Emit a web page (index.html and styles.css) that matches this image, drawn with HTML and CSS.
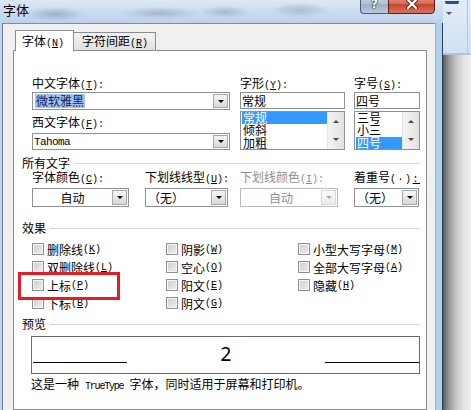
FILE: index.html
```html
<!DOCTYPE html>
<html lang="zh-CN">
<head>
<meta charset="utf-8">
<title>字体</title>
<link rel="stylesheet" href="styles.css">
</head>
<body>
<div class="desk">
  <div class="window">
    <div class="titlebar">
      <span class="title">字体</span>
      <div class="caption-buttons">
        <span class="cap-btn help">?</span>
        <span class="cap-btn close">
          <svg width="12" height="10" viewBox="0 0 12 10">
            <path d="M2 1 L10 9 M10 1 L2 9" stroke="#5a1a10" stroke-width="4" stroke-linecap="round"/>
            <path d="M2 1 L10 9 M10 1 L2 9" stroke="#ffffff" stroke-width="2.2" stroke-linecap="round"/>
          </svg>
        </span>
      </div>
    </div>
    <div class="window-body">
      <div class="frame-left"></div>
      <div class="client">
        <div class="tabs">
          <div class="tab active">字体<span class="key">(<u>N</u>)</span></div>
          <div class="tab">字符间距<span class="key">(<u>R</u>)</span></div>
        </div>
        <div class="panel">
          <div class="font-row">
            <div class="col col-name">
              <div class="lbl">中文字体<span class="key">(<u>T</u>):</span></div>
              <div class="combo tall"><span class="field"><span class="sel">微软雅黑</span></span><span class="drop"></span></div>
              <div class="lbl lbl-second">西文字体<span class="key">(<u>F</u>):</span></div>
              <div class="combo short"><span class="field"><span class="mono">Tahoma</span></span><span class="drop"></span></div>
            </div>
            <div class="col col-style">
              <div class="lbl">字形<span class="key">(<u>Y</u>):</span></div>
              <div class="textbox">常规</div>
              <div class="listbox">
                <ul class="items"><li class="on">常规</li><li>倾斜</li><li>加粗</li></ul>
                <div class="vscroll"><span class="sbtn"><span class="arrow up"></span></span><span class="sbtn"><span class="arrow down"></span></span></div>
              </div>
            </div>
            <div class="col col-size">
              <div class="lbl">字号<span class="key">(<u>S</u>):</span></div>
              <div class="textbox">四号</div>
              <div class="listbox">
                <ul class="items"><li>三号</li><li>小三</li><li class="on">四号</li></ul>
                <div class="vscroll"><span class="sbtn"><span class="arrow up"></span></span><span class="sbtn"><span class="arrow down"></span></span></div>
              </div>
            </div>
          </div>

          <div class="group group-all">所有文字</div>
          <div class="field-row">
            <div class="fld">
              <div class="lbl">字体颜色<span class="key">(<u>C</u>):</span></div>
              <div class="combo mid w-color"><span class="field center">自动</span><span class="drop"></span></div>
            </div>
            <div class="fld">
              <div class="lbl">下划线线型<span class="key">(<u>U</u>):</span></div>
              <div class="combo mid w-line"><span class="field pad">（无）</span><span class="drop"></span></div>
            </div>
            <div class="fld">
              <div class="lbl off">下划线颜色<span class="key">(<u>I</u>):</span></div>
              <div class="combo mid w-lcolor disabled"><span class="field center">自动</span><span class="drop"></span></div>
            </div>
            <div class="fld">
              <div class="lbl">着重号<span class="key wide">(·)<u>:</u></span></div>
              <div class="combo mid w-dot"><span class="field pad">（无）</span><span class="drop"></span></div>
            </div>
          </div>

          <div class="group group-fx">效果</div>
          <div class="checks">
            <div class="check"><span class="box"></span>删除线<span class="key">(<u>K</u>)</span></div>
            <div class="check"><span class="box"></span>双删除线<span class="key">(<u>L</u>)</span></div>
            <div class="check"><span class="box"></span>上标<span class="key">(<u>P</u>)</span></div>
            <div class="check"><span class="box"></span>下标<span class="key">(<u>B</u>)</span></div>
            <div class="check"><span class="box"></span>阴影<span class="key">(<u>W</u>)</span></div>
            <div class="check"><span class="box"></span>空心<span class="key">(<u>O</u>)</span></div>
            <div class="check"><span class="box"></span>阳文<span class="key">(<u>E</u>)</span></div>
            <div class="check"><span class="box"></span>阴文<span class="key">(<u>G</u>)</span></div>
            <div class="check"><span class="box"></span>小型大写字母<span class="key">(<u>M</u>)</span></div>
            <div class="check"><span class="box"></span>全部大写字母<span class="key">(<u>A</u>)</span></div>
            <div class="check"><span class="box"></span>隐藏<span class="key">(<u>H</u>)</span></div>
          </div>

          <div class="group group-preview">预览</div>
          <div class="preview">
            <span class="rule rule-left"></span>
            <span class="sample">2</span>
            <span class="rule"></span>
          </div>
          <div class="note">这是一种<span class="mono-s">TrueType</span>字体，同时适用于屏幕和打印机。</div>
        </div>
      </div>
      <div class="frame-right"></div>
    </div>
  </div>
  <div class="side">
    <div class="ribbon">
      <div class="ribbon-group">
        <span class="ribbon-glyph"></span>
        <span class="ribbon-more"></span>
      </div>
    </div>
    <div class="side-shadow"></div>
  </div>
</div>
<div class="callout"></div>
</body>
</html>
```

FILE: styles.css
```css
* { box-sizing: border-box; }

html, body { margin: 0; padding: 0; }

body {
  width: 471px;
  height: 410px;
  overflow: hidden;
  position: relative;
  background: #fff;
  color: #000;
  font-family: "Noto Sans CJK SC", "Noto Sans", sans-serif;
  font-size: 12px;
}

u { text-decoration: underline; text-underline-offset: 1px; }

/* mnemonic suffix such as (N): drawn with half-width monospaced glyphs */
.key {
  font-family: "Liberation Mono", monospace;
  font-size: 10px;
}

.key.wide { letter-spacing: 1.5px; }

.desk { display: flex; height: 410px; }

/* ---------- window chrome ---------- */
.window {
  width: 443px;
  flex: none;
  display: flex;
  flex-direction: column;
}

.titlebar {
  height: 23px;
  flex: none;
  display: flex;
  justify-content: space-between;
  align-items: flex-start;
  background:
    radial-gradient(ellipse 30px 7px at 55px 14px, rgba(80, 100, 128, 0.35), transparent),
    radial-gradient(ellipse 40px 6px at 160px 13px, rgba(80, 100, 128, 0.3), transparent),
    radial-gradient(ellipse 25px 6px at 225px 12px, rgba(80, 100, 128, 0.3), transparent),
    radial-gradient(ellipse 30px 7px at 300px 10px, rgba(80, 100, 128, 0.28), transparent),
    linear-gradient(#dce8f5, #c9dbef 55%, #bcd2ea);
}

.title {
  margin: 2px 0 0 3px;
  font-size: 13px;
  line-height: 16px;
}

.caption-buttons {
  display: flex;
  margin: -7px 8px 0 0;
}

.cap-btn {
  height: 21px;
  display: flex;
  align-items: center;
  justify-content: center;
}

.help {
  width: 28px;
  border: 1px solid #4b5d73;
  border-right: none;
  border-radius: 0 0 0 4px;
  background: linear-gradient(#d2deea, #b2c3d6 50%, #9aafc6 51%, #b8c9da);
  color: #fff;
  font-family: "DejaVu Sans", sans-serif;
  font-weight: bold;
  font-size: 12px;
  text-shadow: 0 0 1px #1f2d40, 0 0 1px #1f2d40, 0 0 2px #1f2d40;
}

.close {
  width: 47px;
  border: 1px solid #5d1a10;
  border-radius: 0 0 4px 0;
  background: linear-gradient(#eba597, #d86b57 50%, #c2432d 51%, #d9735d);
}

.window-body {
  flex: 1;
  display: flex;
  min-height: 0;
}

.frame-left {
  width: 3px;
  flex: none;
  background: linear-gradient(to right, #c1d6ec 0 2px, #66778c 2px);
}

.frame-right {
  width: 8px;
  flex: none;
  background: linear-gradient(to right, #a7adb5 0 1px, #b0d1ee 1px 7px, #2f3e50 7px);
}

.client {
  width: 432px;
  flex: none;
  display: flex;
  flex-direction: column;
  background: #f0f0f0;
  border-top: 1px solid #7d8fa5;
  padding: 6px 0 0 10px;
}

/* ---------- tabs ---------- */
.tabs {
  height: 20px;
  flex: none;
  display: flex;
  align-items: flex-end;
  padding-left: 2px;
}

.tab {
  border: 1px solid #898c95;
  border-bottom: none;
  line-height: 14px;
  white-space: nowrap;
}

.tab.active {
  position: relative;
  z-index: 1;
  width: 59px;
  height: 21px;
  margin-bottom: -1px;
  padding: 3px 0 0 6px;
  background: #fff;
}

.tab + .tab {
  width: 83px;
  height: 18px;
  margin-left: -1px;
  padding: 1px 0 0 8px;
  background: linear-gradient(#f3f3f3, #e1e1e1);
}

.panel {
  width: 414px;
  flex: 1;
  background: #fff;
  border: 1px solid #898c95;
  padding: 25px 6px 0 8px;
}

/* ---------- shared controls ---------- */
.lbl {
  height: 14px;
  line-height: 14px;
  white-space: nowrap;
}

.lbl.off { color: #8e8e8e; }

.combo {
  display: flex;
  border: 1px solid #8e9196;
  background: #fff;
  white-space: nowrap;
}

.combo .field {
  flex: 1;
  min-width: 0;
  display: flex;
  align-items: center;
  padding-left: 1px;
}

.combo .field.center { justify-content: center; }
.combo .field.pad { padding-left: 2px; }

.combo .drop {
  width: 15px;
  flex: none;
  margin: 1px;
  border: 1px solid #a5a8ac;
  background: linear-gradient(#f7f7f7, #d8d8d8);
  display: flex;
  align-items: center;
  justify-content: center;
}

.combo .drop::after {
  content: "";
  border-top: 3px solid #000;
  border-left: 3px solid transparent;
  border-right: 3px solid transparent;
}

.combo.disabled { border-color: #b9bcc0; color: #8e8e8e; }
.combo.disabled .drop { border-color: #d4d6d8; background: linear-gradient(#fbfbfb, #ececec); }
.combo.disabled .drop::after { border-top-color: #a8a8a8; }

.combo.tall { height: 18px; margin-top: 2px; }
.combo.short { height: 17px; margin-top: 4px; }
.combo.mid { height: 19px; margin-top: 4px; }

.sel {
  background: #a3c3ee;
  color: #0d1d5e;
  padding: 0 1px;
  line-height: 14px;
  margin-left: 1px;
}

.mono {
  font-family: "Liberation Mono", monospace;
  font-size: 11px;
  letter-spacing: -0.6px;
}

.textbox {
  height: 17px;
  margin-top: 2px;
  border: 1px solid #8e9196;
  padding-left: 1px;
  line-height: 15px;
}

.listbox {
  height: 39px;
  margin-top: 2px;
  border: 1px solid #8e9196;
  display: flex;
}

.items {
  flex: 1;
  margin: 0;
  padding: 0;
  list-style: none;
}

.items li {
  height: 12.33px;
  line-height: 12.33px;
  margin-left: 1px;
  padding-left: 1px;
}

.items li.on { background: #3399ff; color: #fff; }

.vscroll {
  width: 17px;
  flex: none;
  display: flex;
  flex-direction: column;
  border-left: 1px solid #e6e6e6;
}

.sbtn {
  flex: 1;
  display: flex;
  align-items: center;
  justify-content: center;
  background: linear-gradient(to right, #f4f4f4, #e2e2e2);
}

.arrow { border-left: 3px solid transparent; border-right: 3px solid transparent; }
.arrow.up { border-bottom: 3px solid #4a4a4a; }
.arrow.down { border-top: 3px solid #4a4a4a; }

/* ---------- font row ---------- */
.font-row {
  display: flex;
  padding-left: 10px;
}

.col-name { width: 198px; margin-right: 10px; }
.col-style { width: 105px; margin-right: 9px; }
.col-size { width: 66px; }

.lbl-second { margin-top: 5px; }

/* ---------- group headings ---------- */
.group {
  display: flex;
  align-items: center;
  height: 14px;
  line-height: 14px;
  white-space: nowrap;
}

.group::after {
  content: "";
  flex: 1;
  height: 1px;
  margin-left: 4px;
  background: #d5d9de;
}

.group-all { margin-top: 6px; }
.group-fx { margin-top: 14px; }
.group-preview { margin-top: 5px; }

/* ---------- text attributes row ---------- */
.field-row {
  display: grid;
  grid-template-columns: 113px 95px 114px 66px;
  padding-left: 10px;
}

.w-color { width: 97px; }
.w-line { width: 83px; }
.w-lcolor { width: 98px; }
.w-dot { width: 65px; }

/* ---------- effects ---------- */
.checks {
  display: grid;
  grid-template-columns: 134px 132px 1fr;
  grid-template-rows: repeat(4, 18px);
  grid-auto-flow: column;
  margin-top: 5px;
  padding-left: 10px;
}

.check {
  display: flex;
  align-items: center;
  white-space: nowrap;
}

.box {
  width: 12px;
  height: 12px;
  flex: none;
  margin-right: 3px;
  border: 1px solid #8f8f8f;
  box-shadow: inset 0 0 0 1px #f6f6f6;
  background: linear-gradient(135deg, #cdcdcd, #efefef);
}

/* ---------- preview ---------- */
.preview {
  width: 389px;
  height: 38px;
  margin: 5px 0 0 9px;
  border: 1px solid #6a6a6a;
  display: flex;
  align-items: flex-start;
}

.rule {
  width: 94px;
  height: 1px;
  flex: none;
  margin-top: 25px;
  background: #000;
}

.rule-left { margin-left: 1px; }

.sample {
  flex: 1;
  margin-top: 8px;
  text-align: center;
  font-family: "Noto Sans", sans-serif;
  font-size: 19px;
  line-height: 19px;
}

.note {
  margin-top: 3px;
  padding-left: 9px;
  line-height: 14px;
  white-space: nowrap;
}

.mono-s {
  font-family: "Liberation Mono", monospace;
  font-size: 10px;
  letter-spacing: -1.2px;
  margin: 0 6px;
}

/* ---------- background application ---------- */
.side {
  flex: 1;
  display: flex;
  flex-direction: column;
}

.ribbon {
  height: 55px;
  flex: none;
  background: linear-gradient(#e3edf9, #d0e0f3);
  border-bottom: 2px solid #aec4de;
  overflow: hidden;
}

.ribbon-group {
  width: 25px;
  height: 100%;
  border-right: 1px solid #b2c6dd;
  display: flex;
  flex-direction: column;
  padding-left: 2px;
}

.ribbon-glyph {
  width: 14px;
  height: 3px;
  margin-top: 1px;
  background: #2a4f8c;
  border-radius: 0 0 2px 2px;
}

.ribbon-more {
  width: 0;
  height: 0;
  margin: 8px 0 0 1px;
  border-top: 3px solid #3b5a8a;
  border-left: 3px solid transparent;
  border-right: 3px solid transparent;
}

.side-shadow {
  flex: 1;
  background: linear-gradient(to right, #5c5c5c, #8f8f8f 18%, #c4c4c4 45%, #e4e4e4 75%, #eeeeee);
}

/* ---------- annotation frame ---------- */
.callout {
  position: absolute;
  left: 18px;
  top: 272px;
  width: 102px;
  height: 28px;
  border: 3px solid #e61c22;
}
```
